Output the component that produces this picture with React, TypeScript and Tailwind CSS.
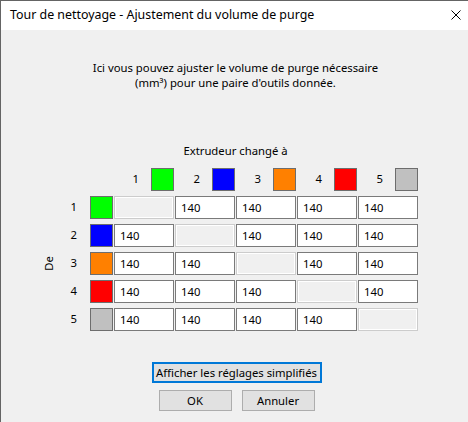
const COLORS = ["#00ff00", "#0000ff", "#ff8000", "#ff0000", "#c0c0c0"];
const COLS = [1, 2, 3, 4, 5];

function Swatch({ color }: { color: string }) {
  return <div className="h-[23px] w-[23px] border border-[#6d6d6d]" style={{ backgroundColor: color }} />;
}

function Cell({ off }: { off: boolean }) {
  if (off) {
    return <div className="h-[23px] w-[60px] border border-[#cccccc] bg-[#f0f0f0] shadow-[inset_0_0_0_1px_#ffffff]" />;
  }
  return (
    <div className="flex h-[23px] w-[60px] items-center border border-[#7a7a7a] bg-white pl-[5px] leading-none">
      140
    </div>
  );
}

export default function App() {
  return (
    <div className="h-[422px] w-[468px] overflow-hidden border-t border-l border-[#646464] bg-[#f0f0f0] font-['Noto_Sans',sans-serif] text-[11.3px] text-black">
      {/* title bar */}
      <div className="flex h-[29px] items-center justify-between bg-white pl-[9px] pr-[7px] text-[12.4px]">
        <span>Tour de nettoyage - Ajustement du volume de purge</span>
        <svg width="10" height="10" viewBox="0 0 10 10" className="mb-[1px]">
          <path d="M0.5 0.5 L9.5 9.5 M9.5 0.5 L0.5 9.5" stroke="#000" strokeWidth="1" />
        </svg>
      </div>

      <div className="flex w-[469px] flex-col items-center">
        <p className="mt-[30px] text-center leading-[15px]">
          Ici vous pouvez ajuster le volume de purge nécessaire
          <br />
          (mm³) pour une paire d'outils donnée.
        </p>

        <p className="mt-[53px] leading-[15px]">Extrudeur changé à</p>
      </div>

      {/* matrix */}
      <div className="mt-[10px] ml-[40px] grid grid-cols-[16px_31px_23px_repeat(5,60px)] grid-rows-[23px_repeat(5,23px)] gap-x-px gap-y-[5px]">
        <div />
        <div />
        <div />
        {COLS.map((c) => (
          <div key={c} className="flex items-center justify-end gap-[12px]">
            <span>{c}</span>
            <Swatch color={COLORS[c - 1]} />
          </div>
        ))}

        <div className="col-start-1 row-span-5 row-start-2 flex items-center justify-center">
          <span className="rotate-180 [writing-mode:vertical-rl]">De</span>
        </div>
        {COLS.map((r) => (
          <div key={r} className="contents">
            <div className="col-start-2 flex items-center justify-end pr-[12px]">{r}</div>
            <Swatch color={COLORS[r - 1]} />
            {COLS.map((c) => (
              <Cell key={c} off={c === r} />
            ))}
          </div>
        ))}
      </div>

      {/* buttons */}
      <div className="mt-[31px] flex w-[471px] flex-col items-center gap-[7px]">
        <button className="h-[21px] w-[170px] whitespace-nowrap border-2 border-[#0078d7] bg-[#e1e1e1] leading-none">
          Afficher les réglages simplifiés
        </button>
        <div className="flex gap-[10px]">
          <button className="h-[21px] w-[73px] border border-[#adadad] bg-[#e1e1e1] leading-none">OK</button>
          <button className="h-[21px] w-[73px] border border-[#adadad] bg-[#e1e1e1] leading-none">Annuler</button>
        </div>
      </div>
    </div>
  );
}
